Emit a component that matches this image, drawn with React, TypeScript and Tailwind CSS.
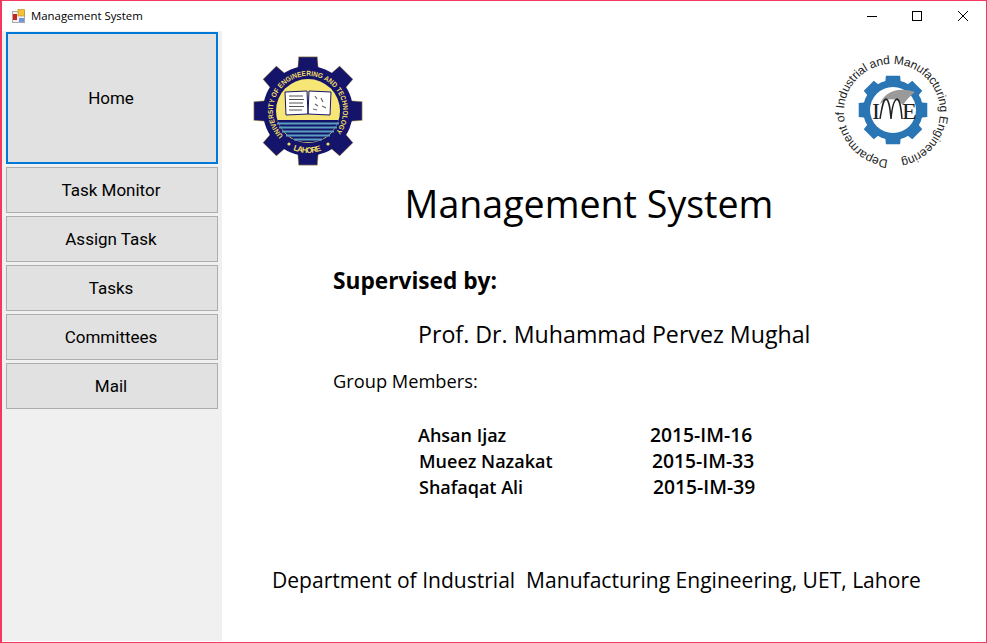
import React from 'react';

const gearPath = (cx: number, cy: number, rOut: number, rIn: number, teeth: number, tip = 0.22, base = 0.3) => {
  const pts: string[] = [];
  const step = 360 / teeth;
  const pt = (r: number, a: number) => {
    const t = (a * Math.PI) / 180;
    return `${(cx + r * Math.cos(t)).toFixed(2)} ${(cy + r * Math.sin(t)).toFixed(2)}`;
  };
  for (let i = 0; i < teeth; i++) {
    const a = -90 + i * step;
    pts.push(pt(rIn, a - step * base), pt(rOut, a - step * tip), pt(rOut, a + step * tip), pt(rIn, a + step * base));
  }
  return `M${pts.join('L')}Z`;
};

const UetLogo = () => (
  <svg width="110" height="110" viewBox="0 0 110 110">
    <path d={gearPath(55, 55, 55, 44, 8)} fill="#15146b" stroke="#d8c24a" strokeWidth="0.5" />
    <circle cx="55" cy="55" r="45" fill="#15146b" />
    <circle cx="55" cy="55" r="32" fill="#f6e675" />
    <path d="M24.5 64 H85.5 A32 32 0 0 1 24.5 64Z" fill="#15146b" />
    <path d="M24 67.5 H86 M26 71.5 H84 M29 75.5 H81 M33 79.5 H77 M41 83.5 H69" stroke="#5a9fc0" strokeWidth="2" fill="none" />
    <path d="M32 36 L54 35 L55 58 L33 59Z M56 35 L78 36 L77 59 L55 58Z" fill="#fff" stroke="#15146b" strokeWidth="1" />
    <path d="M36 40 H50 M36 43.5 H51 M36 47 H50 M36 50.5 H51 M36 54 H49" stroke="#555" strokeWidth="1" />
    <path d="M62 40 L64 43 M68 42 L70 46 M62 48 L65 50 M69 50 L73 52 M60 53 L64 54" stroke="#666" strokeWidth="1.2" />
    <defs>
      <path id="uet-top" d="M30.3 79.7 A35 35 0 1 1 79.7 79.7" />
      <path id="uet-bottom" d="M40 94 A41.5 41.5 0 0 0 70 94" />
    </defs>
    <text fontFamily="'Liberation Sans', sans-serif" fontSize="7.2" fontWeight="700" fill="#f3df64">
      <textPath href="#uet-top" textLength="160" lengthAdjust="spacingAndGlyphs">UNIVERSITY OF ENGINEERING AND TECHNOLOGY</textPath>
    </text>
    <text fontFamily="'Liberation Sans', sans-serif" fontSize="8" fontWeight="700" fill="#f3df64">
      <textPath href="#uet-bottom" textLength="29">LAHORE</textPath>
    </text>
    <circle cx="36" cy="88" r="1.6" fill="#f3df64" />
    <circle cx="75" cy="88" r="1.6" fill="#f3df64" />
  </svg>
);

const ImeLogo = () => (
  <svg width="120" height="120" viewBox="0 0 120 120">
    <path d={gearPath(61, 58, 35, 28, 8, 0.26, 0.36)} fill="#2a75b3" />
    <circle cx="61" cy="58" r="30" fill="#2a75b3" />
    <circle cx="61" cy="58" r="23" fill="#fff" />
    <path d="M48 52 C52 40 66 34 83 40 C78 44 74 48 71 53 C64 45 55 46 48 52Z" fill="#9a9a9a" />
    <text x="40" y="67" fontFamily="'Liberation Serif', serif" fontSize="24" fill="#222">I</text>
    <text x="70" y="67" fontFamily="'Liberation Serif', serif" fontSize="24" fill="#222">E</text>
    <path d="M48 67 C50 55 51 48 54 47 C57 48 58 55 59 67 M59 67 C60 55 62 48 65 47 C68 48 69 55 70 67" fill="none" stroke="#222" strokeWidth="1.5" />
    <defs>
      <path id="ime-ring" d="M56 107.8 A48 48 0 1 1 64 107.8" />
    </defs>
    <text fontFamily="'Liberation Sans', sans-serif" fontSize="12" fill="#222">
      <textPath href="#ime-ring" textLength="288" lengthAdjust="spacing">Deparment of Industrial and Manufacturing Engineering</textPath>
    </text>
  </svg>
);

const AppIcon = () => (
  <svg width="16" height="16" viewBox="0 0 16 16">
    <rect x="1.5" y="3.5" width="12" height="11" fill="#f2f2f2" stroke="#a9a9a9" />
    <rect x="2" y="6" width="4" height="6" fill="#c8261e" />
    <rect x="7" y="1.5" width="6.5" height="6.5" fill="#f5c233" stroke="#b98a1f" strokeWidth="0.6" />
    <rect x="8" y="10" width="5" height="4" fill="#6f97e0" />
  </svg>
);

const menu = ['Task Monitor', 'Assign Task', 'Tasks', 'Committees', 'Mail'];

const members = [
  { name: 'Ahsan Ijaz', reg: '2015-IM-16', cls: 'ml-[196px]', w: 'w-[232px]' },
  { name: 'Mueez Nazakat', reg: '2015-IM-33', cls: 'ml-[197px]', w: 'w-[233px]' },
  { name: 'Shafaqat Ali', reg: '2015-IM-39', cls: 'ml-[197px]', w: 'w-[234px]' },
];

export default function App() {
  return (
    <div className="w-[987px] h-[643px] flex flex-col bg-white border border-l-2 border-[#f4385f] font-['Open_Sans',sans-serif] text-black overflow-hidden">
      <div className="h-[30px] shrink-0 flex items-center pl-[9px]">
        <AppIcon />
        <span className="ml-[4px] text-[11.4px]">Management System</span>
        <div className="ml-auto flex items-center">
          <svg width="46" height="29" viewBox="0 0 46 29"><path d="M20 14.5H30" stroke="#000" /></svg>
          <svg width="46" height="29" viewBox="0 0 46 29"><rect x="19.5" y="9.5" width="9" height="9" fill="none" stroke="#000" /></svg>
          <svg width="46" height="29" viewBox="0 0 46 29" className="mr-[1px]"><path d="M19 9L29 19M29 9L19 19" stroke="#000" /></svg>
        </div>
      </div>
      <div className="flex flex-1 min-h-0">
        <div className="w-[220px] shrink-0 mb-[1px] bg-[#f0f0f0] pl-[4px] pr-[4px] pt-[1px] flex flex-col gap-[3px] font-['Roboto',sans-serif] text-[17px]">
          <button className="h-[132px] pr-[2px] pt-[1px] bg-[#e1e1e1] border-2 border-[#0078d7] text-center">Home</button>
          {menu.map((m) => (
            <button key={m} className="h-[46px] pr-[2px] pt-[1px] bg-[#e1e1e1] border border-[#adadad] text-center">{m}</button>
          ))}
        </div>
        <div className="flex-1 min-w-0 flex flex-col pb-[48px]">
          <div className="flex justify-between items-start pl-[31px] pr-[34px] pt-[25px] h-[149px]">
            <UetLogo />
            <div className="-mt-[4px]"><ImeLogo /></div>
          </div>
          <h1 className="text-center text-[37.6px] leading-[48px] mr-[30px]">Management System</h1>
          <div className="pl-[111px] mt-[38px] text-[22.7px] leading-[30px] font-bold">Supervised by:</div>
          <div className="pl-[196px] mt-[23px] text-[23.2px] leading-[30px]">Prof. Dr. Muhammad Pervez Mughal</div>
          <div className="pl-[111px] mt-[20px] text-[18.25px] leading-[24px]">Group Members:</div>
          <div className="mt-[29px] flex flex-col text-[18px] leading-[26px] font-semibold">
            {members.map((m) => (
              <div key={m.name} className={`flex ${m.cls}`}>
                <span className={m.w}>{m.name}</span>
                <span className="text-[19.3px]">{m.reg}</span>
              </div>
            ))}
          </div>
          <div className="mt-auto pl-[50px] text-[21.05px] leading-[28px] whitespace-pre">Department of Industrial  Manufacturing Engineering, UET, Lahore</div>
        </div>
      </div>
    </div>
  );
}
